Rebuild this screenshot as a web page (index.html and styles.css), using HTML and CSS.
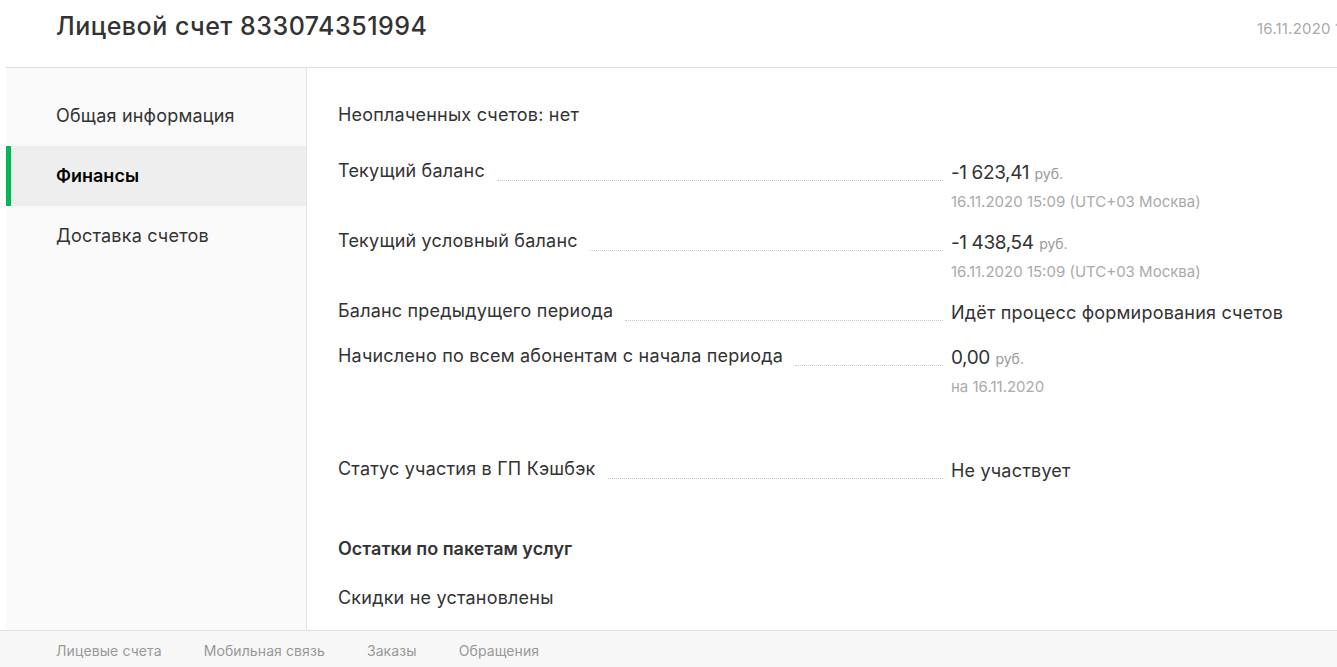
FILE: index.html
```html
<!DOCTYPE html>
<html lang="ru">
<head>
    <meta charset="UTF-8">
    <meta name="viewport" content="width=device-width, initial-scale=1.0">
    <title>Лицевой счет</title>
    <link rel="stylesheet" href="styles.css">
</head>
<body>

<div class="page">
    <div class="header">
        <h1 class="title">Лицевой счет 833074351994</h1>
        <div class="header-date">16.11.2020 15:09</div>
    </div>

    <div class="layout">
        <div class="sidebar">
            <a class="side-item">Общая информация</a>
            <a class="side-item active">Финансы</a>
            <a class="side-item">Доставка счетов</a>
        </div>

        <div class="content">
            <p class="note">Неоплаченных счетов: нет</p>

            <div class="rows">
                <div class="row">
                    <div class="label"><span>Текущий баланс</span><i class="dots"></i></div>
                    <div class="value">
                        <div class="amount"><span class="num">-1 623,41</span> <span class="cur">руб.</span></div>
                        <div class="sub">16.11.2020 15:09 (UTC+03 Москва)</div>
                    </div>
                </div>
                <div class="row">
                    <div class="label"><span>Текущий условный баланс</span><i class="dots"></i></div>
                    <div class="value">
                        <div class="amount"><span class="num">-1 438,54</span> <span class="cur">руб.</span></div>
                        <div class="sub">16.11.2020 15:09 (UTC+03 Москва)</div>
                    </div>
                </div>
                <div class="row">
                    <div class="label"><span>Баланс предыдущего периода</span><i class="dots"></i></div>
                    <div class="value">
                        <div class="amount text">Идёт процесс формирования счетов</div>
                    </div>
                </div>
                <div class="row">
                    <div class="label"><span>Начислено по всем абонентам с начала периода</span><i class="dots"></i></div>
                    <div class="value">
                        <div class="amount"><span class="num">0,00</span> <span class="cur">руб.</span></div>
                        <div class="sub">на 16.11.2020</div>
                    </div>
                </div>
                <div class="row spaced">
                    <div class="label"><span>Статус участия в ГП Кэшбэк</span><i class="dots"></i></div>
                    <div class="value">
                        <div class="amount text">Не участвует</div>
                    </div>
                </div>
            </div>

            <h3 class="section-title">Остатки по пакетам услуг</h3>
            <p class="note">Скидки не установлены</p>
        </div>
    </div>
</div>

<div class="footer">
    <a>Лицевые счета</a>
    <a>Мобильная связь</a>
    <a>Заказы</a>
    <a>Обращения</a>
</div>

</body>
</html>
```

FILE: styles.css
```css
html, body {
    height: 100%;
}
body {
    margin: 0;
    font-family: Inter, "Liberation Sans", sans-serif;
    color: #333;
    background-color: #fff;
    display: flex;
    flex-direction: column;
    overflow: hidden;
}
.page {
    flex: 1;
    display: flex;
    flex-direction: column;
    margin-left: 6px;
    min-height: 0;
}
.header {
    display: flex;
    justify-content: space-between;
    align-items: center;
    height: 67px;
    padding-left: 50px;
    border-bottom: 1px solid #dedede;
}
.title {
    margin: 0 0 16px 0;
    font-size: 25px;
    font-weight: 500;
    line-height: 30px;
    letter-spacing: 0.5px;
}
.header-date {
    flex: 0 0 80px;
    white-space: nowrap;
    overflow: hidden;
    font-size: 15px;
    letter-spacing: 0.2px;
    color: #aaa;
    margin-bottom: 10px;
}
.layout {
    flex: 1;
    display: flex;
    min-height: 0;
}
.sidebar {
    width: 300px;
    padding-top: 18px;
    background-color: #fafafa;
    border-right: 1px solid #e4e4e4;
}
.side-item {
    display: block;
    height: 60px;
    line-height: 60px;
    padding-left: 50px;
    font-size: 18px;
    letter-spacing: 0.2px;
    color: #333;
}
.side-item.active {
    background-color: #eeeeee;
    border-left: 5px solid #00b956;
    padding-left: 45px;
    font-weight: 600;
    letter-spacing: 0;
    color: #000;
}
.content {
    flex: 1;
    padding: 35px 32px 0 31px;
    letter-spacing: 0.2px;
}
.note {
    margin: 0;
    font-size: 18px;
    line-height: 24px;
}
.rows {
    margin-top: 32px;
}
.row {
    display: grid;
    grid-template-columns: 605px 1fr;
    column-gap: 8px;
    margin-bottom: 17px;
}
.row.spaced {
    margin-top: 60px;
}
.label {
    display: flex;
    font-size: 18px;
    line-height: 24px;
}
.dots {
    flex: 1;
    height: 21px;
    margin-left: 12px;
    border-bottom: 1px dotted #c8c8c8;
}
.amount {
    font-size: 19px;
    line-height: 28px;
}
.amount.text {
    font-size: 18px;
}
.num {
    letter-spacing: -0.4px;
}
.cur {
    font-size: 14px;
    letter-spacing: 0;
    color: #999;
}
.sub {
    margin-top: 4px;
    font-size: 15px;
    line-height: 20px;
    letter-spacing: 0;
    color: #aaa;
}
.section-title {
    margin: 52px 0 25px 0;
    font-size: 18px;
    line-height: 24px;
    font-weight: 600;
    letter-spacing: 0;
}
.footer {
    height: 37px;
    display: flex;
    align-items: center;
    gap: 42px;
    padding: 2px 0 0 56px;
    box-sizing: border-box;
    background-color: #f7f7f7;
    border-top: 1px solid #e0e0e0;
}
.footer a {
    font-size: 14px;
    letter-spacing: 0.1px;
    color: #999;
}
```
